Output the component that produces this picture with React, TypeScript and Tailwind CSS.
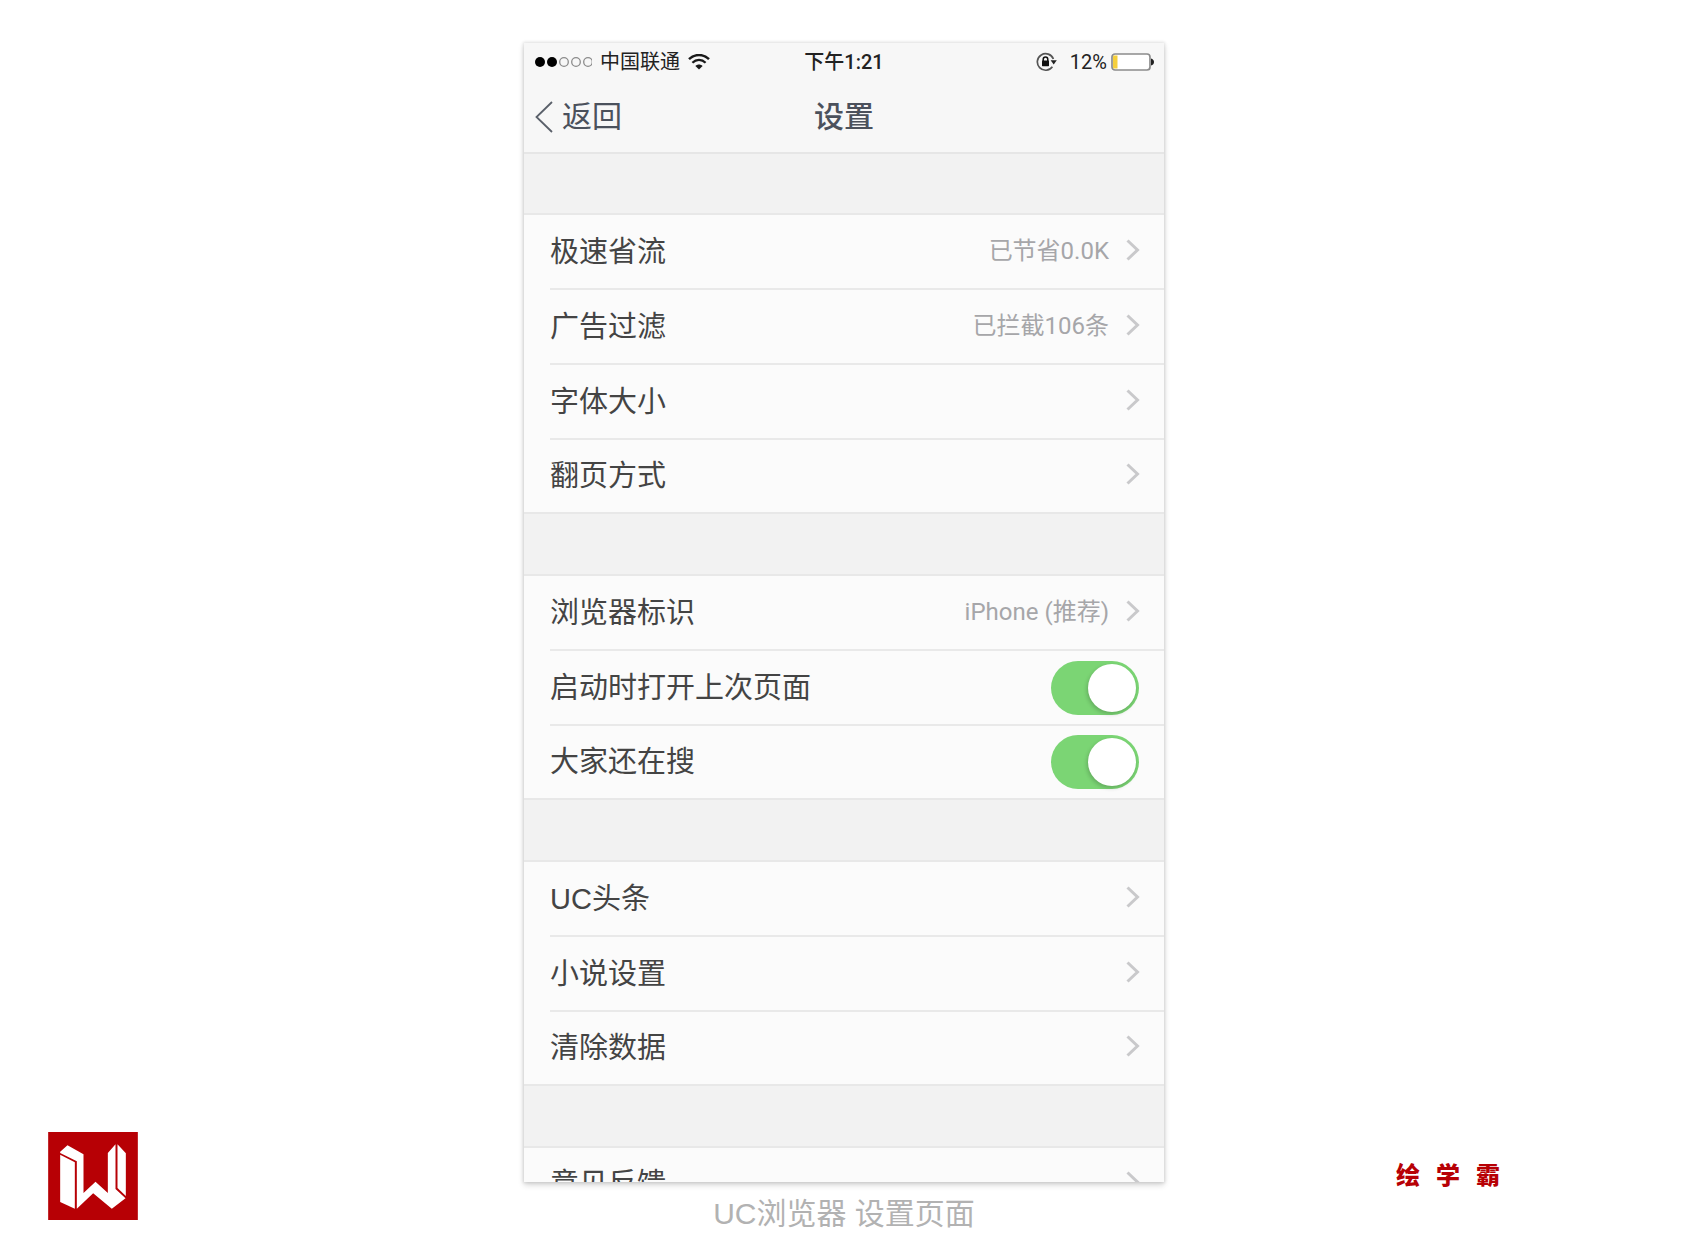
import { useState } from 'react'

type Row = {
  label: string
  value?: string
  toggle?: boolean
}

const sections: Row[][] = [
  [
    { label: '极速省流', value: '已节省0.0K' },
    { label: '广告过滤', value: '已拦截106条' },
    { label: '字体大小' },
    { label: '翻页方式' }
  ],
  [
    { label: '浏览器标识', value: 'iPhone (推荐)' },
    { label: '启动时打开上次页面', toggle: true },
    { label: '大家还在搜', toggle: true }
  ],
  [{ label: 'UC头条' }, { label: '小说设置' }, { label: '清除数据' }],
  [{ label: '意见反馈' }]
]

function ChevronRight() {
  return (
    <svg className="h-6 w-4 shrink-0" viewBox="0 0 16 24" fill="none" stroke="#c9c9cb" strokeWidth="3">
      <path d="M2.5 1.5 L12.5 11 L2.5 20.5" />
    </svg>
  )
}

function WifiIcon() {
  return (
    <svg className="h-4 w-[22px]" viewBox="0 0 22 16" fill="none" stroke="#1a1a1a">
      <path d="M1 5.2 C6.5 -0.4 15.5 -0.4 21 5.2" strokeWidth="2.4" />
      <path d="M4.4 8.8 C8.2 5 13.8 5 17.6 8.8" strokeWidth="2.2" />
      <path d="M11 15.6 L7.4 12 C9.4 10 12.6 10 14.6 12 Z" fill="#1a1a1a" stroke="none" />
    </svg>
  )
}

function RotationLockIcon() {
  return (
    <svg className="h-5 w-[22px]" viewBox="0 0 22 20" fill="none">
      <path d="M17.4 7 A8.3 8.3 0 1 0 16.4 14.8" stroke="#555" strokeWidth="1.7" />
      <path d="M14.6 8.2 H20.8 L17.7 12.4 Z" fill="#222" />
      <path d="M7.2 9 V7.4 A2.3 2.3 0 0 1 11.8 7.4 V9" stroke="#111" strokeWidth="1.5" />
      <rect x="6" y="8.6" width="7" height="5.6" rx="0.6" fill="#111" />
    </svg>
  )
}

function BatteryIcon() {
  return (
    <svg className="h-[18px] w-[43px]" viewBox="0 0 43 18" fill="none">
      <rect x="1" y="1" width="38" height="16" rx="3" fill="#fff" stroke="#8c8c8c" strokeWidth="1.7" />
      <path d="M3 2.5 H6.5 V15.5 H3 Q2 15.5 2 14.5 V3.5 Q2 2.5 3 2.5 Z" fill="#f5cf3c" />
      <path d="M40 5.5 Q43 6.5 43 9 Q43 11.5 40 12.5 Z" fill="#222" />
    </svg>
  )
}

function StatusBar() {
  return (
    <div className="grid h-[38px] grid-cols-[1fr_auto_1fr] items-center px-[10px] text-[20px] leading-6 text-[#222]">
      <div className="flex items-center">
        <svg className="mr-2 h-3 w-[58px]" viewBox="0 0 58 12">
          <circle cx="6" cy="6" r="5" fill="#000" />
          <circle cx="18" cy="6" r="5" fill="#000" />
          <circle cx="30" cy="6" r="4.3" fill="none" stroke="#8c8c8c" strokeWidth="1.3" />
          <circle cx="42" cy="6" r="4.3" fill="none" stroke="#8c8c8c" strokeWidth="1.3" />
          <circle cx="54" cy="6" r="4.3" fill="none" stroke="#8c8c8c" strokeWidth="1.3" />
        </svg>
        <span className="mr-2">中国联通</span>
        <WifiIcon />
      </div>
      <div className="font-medium">下午1:21</div>
      <div className="flex items-center justify-end">
        <RotationLockIcon />
        <span className="mr-1 ml-3">12%</span>
        <BatteryIcon />
      </div>
    </div>
  )
}

function NavBar() {
  return (
    <div className="grid h-[73px] grid-cols-[1fr_auto_1fr] items-center border-b-2 border-[#e6e6e6] px-[10px] text-[30px] leading-9 text-[#4b515c]">
      <button type="button" className="flex items-center gap-2 justify-self-start">
        <svg className="h-8 w-5" viewBox="0 0 20 32" fill="none" stroke="#5a606a" strokeWidth="1.8">
          <path d="M18 1 L2.5 16 L18 31" />
        </svg>
        返回
      </button>
      <h1 className="font-medium">设置</h1>
    </div>
  )
}

function Toggle({ id }: { id: string }) {
  const [on, setOn] = useState(true)
  return (
    <input
      id={id}
      type="checkbox"
      role="switch"
      checked={on}
      onChange={(e) => setOn(e.target.checked)}
      className="flex h-[54px] w-[88px] shrink-0 appearance-none items-center rounded-full bg-[#d9d9d9] px-[3px] before:size-12 before:rounded-full before:bg-white before:shadow-[-1px_2px_4px_rgba(0,0,0,0.2)] checked:justify-end checked:bg-[#7bd574]"
    />
  )
}

function SettingsRow({ row }: { row: Row }) {
  const shared = 'flex h-full w-full items-center justify-between text-left'

  if (row.toggle) {
    return (
      <div className={`${shared} pr-[25px]`}>
        <label htmlFor={row.label}>{row.label}</label>
        <Toggle id={row.label} />
      </div>
    )
  }

  return (
    <button type="button" className={`${shared} pr-[23px]`}>
      <span>{row.label}</span>
      <span className="flex items-center gap-4 pb-0.5 font-[Roboto,'Noto_Sans_CJK_SC',sans-serif] text-[24px] leading-8 text-[#a6a6a9]">
        {row.value}
        <ChevronRight />
      </span>
    </button>
  )
}

function Logo() {
  return (
    <svg className="h-[88px] w-[90px]" viewBox="55 65 269 264">
      <rect x="55" y="65" width="269" height="264" fill="#b70005" />
      <g fill="#fff">
        <path d="M91 124 L113 105 L161 132 V248 L197 214 L234 248 V128 L257 102 V236 L287 264 L246 295 L190 249 L141 295 V153 L91 128 Z" />
        <path d="M91 133 L135 156 V295 L91 275 Z" />
        <path d="M263 102 L288 129 V257 L263 233 Z" />
      </g>
    </svg>
  )
}

export default function App() {
  return (
    <div className="grid h-screen grid-cols-[1fr_minmax(0,640px)_1fr] bg-white font-[Roboto,'Noto_Sans_CJK_SC',sans-serif]">
      <div className="mb-[34px] flex items-end pl-12">
        <Logo />
      </div>

      <main className="flex min-h-0 flex-col pt-[43px]">
        <div className="min-h-0 flex-1 overflow-hidden bg-[#f2f2f2] shadow-[0_0_3px_1px_rgba(0,0,0,0.1),0_3px_6px_rgba(0,0,0,0.16)]">
          <header className="bg-[#f7f7f7]">
            <StatusBar />
            <NavBar />
          </header>
          <div className="flex flex-col gap-[60px] pt-[59px]">
            {sections.map((rows) => (
              <ul
                key={rows[0].label}
                className="border-y-2 border-[#e8e8e8] bg-[#fbfbfb] pl-[26px] font-['Liberation_Sans','Noto_Sans_CJK_SC',sans-serif] text-[29px] leading-9 text-[#444]"
              >
                {rows.map((row) => (
                  <li key={row.label} className="h-[75px] border-b-2 border-[#e9e9e9] last:h-[72px] last:border-b-0">
                    <SettingsRow row={row} />
                  </li>
                ))}
              </ul>
            ))}
          </div>
        </div>
        <p className="h-[72px] pt-3 text-center font-['Liberation_Sans','Noto_Sans_CJK_SC',sans-serif] text-[30px] leading-10 text-[#b2b2b2]">
          UC浏览器 设置页面
        </p>
      </main>

      <div className="mb-[34px] flex items-end justify-end pr-[188px]">
        <div className="flex h-[88px] items-center gap-4 text-[24px] leading-8 font-black text-[#b70005]">
          <span>绘</span>
          <span>学</span>
          <span>霸</span>
        </div>
      </div>
    </div>
  )
}
